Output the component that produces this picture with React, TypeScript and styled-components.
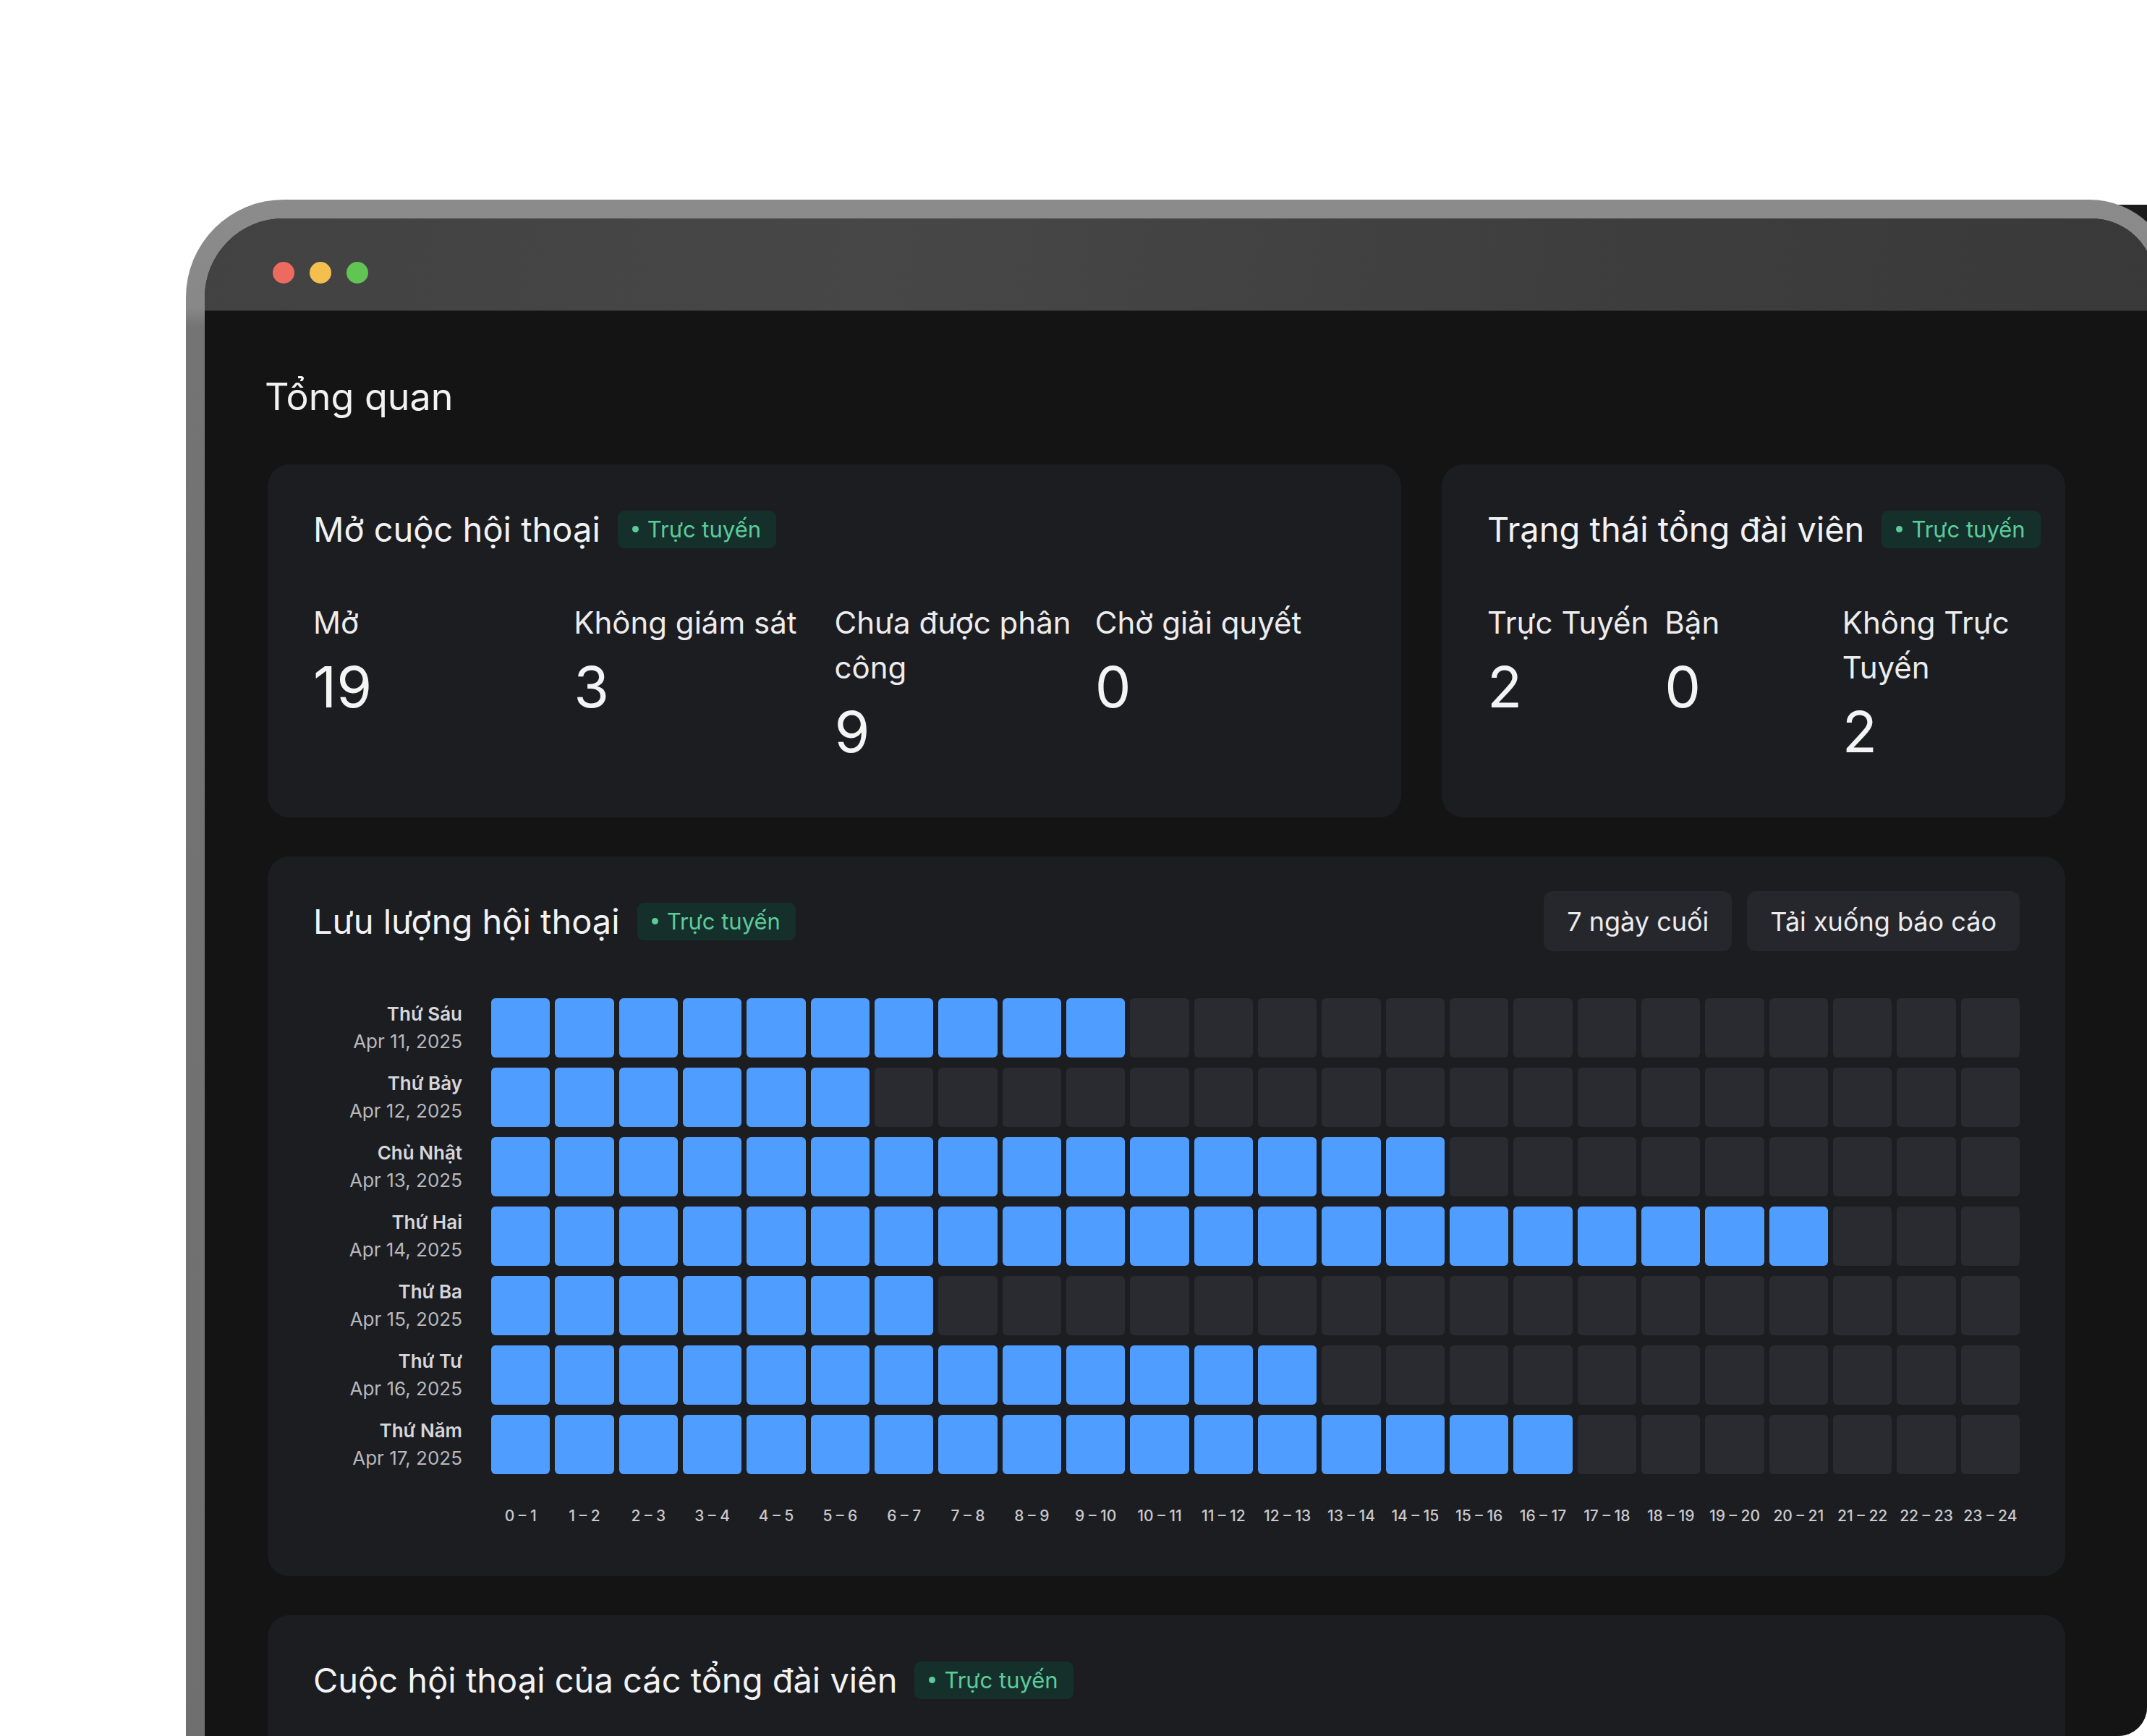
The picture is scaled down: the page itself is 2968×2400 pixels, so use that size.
import React from 'react';
import styled, { createGlobalStyle } from 'styled-components';

const GlobalStyle = createGlobalStyle`
  html, body {
    margin: 0;
    padding: 0;
    background: #ffffff;
    overflow: hidden;
  }
  body {
    font-family: Inter, "Noto Sans", "DejaVu Sans", sans-serif;
    -webkit-font-smoothing: antialiased;
  }
  * {
    box-sizing: border-box;
  }
`;

type Day = { name: string; date: string; filled: number };

const days: Day[] = [
  { name: 'Thứ Sáu', date: 'Apr 11, 2025', filled: 10 },
  { name: 'Thứ Bảy', date: 'Apr 12, 2025', filled: 6 },
  { name: 'Chủ Nhật', date: 'Apr 13, 2025', filled: 15 },
  { name: 'Thứ Hai', date: 'Apr 14, 2025', filled: 21 },
  { name: 'Thứ Ba', date: 'Apr 15, 2025', filled: 7 },
  { name: 'Thứ Tư', date: 'Apr 16, 2025', filled: 13 },
  { name: 'Thứ Năm', date: 'Apr 17, 2025', filled: 17 },
];

const hours = Array.from({ length: 24 }, (_, i) => i);

const openStats = [
  { label: 'Mở', value: 19 },
  { label: 'Không giám sát', value: 3 },
  { label: 'Chưa được phân công', value: 9 },
  { label: 'Chờ giải quyết', value: 0 },
];

const agentStats = [
  { label: 'Trực Tuyến', value: 2 },
  { label: 'Bận', value: 0 },
  { label: 'Không Trực Tuyến', value: 2 },
];

const App: React.FC = () => {
  return (
    <>
      <GlobalStyle />
      <Device>
        <Frame>
          <Screen>
            <TitleBar>
              <Light $color="#ed6a5e" />
              <Light $color="#f5bf4f" />
              <Light $color="#61c554" />
            </TitleBar>
            <Content>
              <PageTitle>Tổng quan</PageTitle>

              <TopGrid>
                <Card>
                  <CardHeader>
                    <CardTitle>Mở cuộc hội thoại</CardTitle>
                    <LiveBadge />
                  </CardHeader>
                  <StatGrid $cols={4}>
                    {openStats.map((s) => (
                      <Stat key={s.label}>
                        <StatLabel>{s.label}</StatLabel>
                        <StatValue>{s.value}</StatValue>
                      </Stat>
                    ))}
                  </StatGrid>
                </Card>

                <Card>
                  <CardHeader>
                    <CardTitle>Trạng thái tổng đài viên</CardTitle>
                    <LiveBadge />
                  </CardHeader>
                  <StatGrid $cols={3}>
                    {agentStats.map((s) => (
                      <Stat key={s.label}>
                        <StatLabel>{s.label}</StatLabel>
                        <StatValue>{s.value}</StatValue>
                      </Stat>
                    ))}
                  </StatGrid>
                </Card>
              </TopGrid>

              <Card $bottom={71}>
                <CardHeader>
                  <CardTitle>Lưu lượng hội thoại</CardTitle>
                  <LiveBadge />
                  <Actions>
                    <ActionButton>7 ngày cuối</ActionButton>
                    <ActionButton>Tải xuống báo cáo</ActionButton>
                  </Actions>
                </CardHeader>

                <Heatmap>
                  {days.map((d) => (
                    <HeatRow key={d.date}>
                      <DayLabel>
                        <DayName>{d.name}</DayName>
                        <DayDate>{d.date}</DayDate>
                      </DayLabel>
                      <Cells>
                        {hours.map((h) => (
                          <Cell key={h} $on={h < d.filled} />
                        ))}
                      </Cells>
                    </HeatRow>
                  ))}
                  <AxisRow>
                    <span />
                    <Cells>
                      {hours.map((h) => (
                        <AxisLabel key={h}>{`${h} – ${h + 1}`}</AxisLabel>
                      ))}
                    </Cells>
                  </AxisRow>
                </Heatmap>
              </Card>

              <Card $minHeight={500}>
                <CardHeader>
                  <CardTitle>Cuộc hội thoại của các tổng đài viên</CardTitle>
                  <LiveBadge />
                </CardHeader>
              </Card>
            </Content>
          </Screen>
        </Frame>
      </Device>
    </>
  );
};

const LiveBadge = () => (
  <Badge>
    <Dot />
    Trực tuyến
  </Badge>
);

const Device = styled.div`
  margin: 276px 0 0 257px;
  width: 2711px;
  height: 2124px;
  overflow: hidden;
  border-bottom-right-radius: 40px;
  background:
    linear-gradient(#ffffff 0 7px, transparent 7px),
    linear-gradient(90deg, transparent 2600px, #1b1b1b 2600px);
`;

const Frame = styled.div`
  width: 2750px;
  height: 100%;
  padding: 26px 0 0 26px;
  border-radius: 135px 119px 0 0;
  background: linear-gradient(
    180deg,
    #8b8b8b 0,
    #888888 150px,
    #747474 175px,
    #6f6f6f 100%
  );
`;

const Screen = styled.div`
  width: 2696px;
  height: 100%;
  border-radius: 109px 88px 0 0;
  background: #141414;
  overflow: hidden;
  display: flex;
  flex-direction: column;
`;

const TitleBar = styled.div`
  height: 128px;
  flex-shrink: 0;
  display: flex;
  align-items: center;
  gap: 21px;
  padding: 22px 0 0 94px;
  background: linear-gradient(100deg, #424242 0%, #474747 35%, #3e3e3e 70%, #393939 100%);
  border-bottom: 1px solid #2b2b2b;
`;

const Light = styled.span<{ $color: string }>`
  width: 30px;
  height: 30px;
  border-radius: 50%;
  background: ${(p) => p.$color};
`;

const Content = styled.div`
  padding: 89px 124px 0 87px;
  display: flex;
  flex-direction: column;
  gap: 54px;
`;

const PageTitle = styled.h1`
  margin: 0 0 9px -4px;
  font-size: 52px;
  line-height: 60px;
  font-weight: 400;
  color: #f2f2f3;
`;

const TopGrid = styled.div`
  display: grid;
  grid-template-columns: 1567px minmax(0, 1fr);
  gap: 56px;
`;

const Card = styled.section<{ $bottom?: number; $minHeight?: number }>`
  min-width: 0;
  background: #1c1d21;
  border-radius: 30px;
  padding: 48px 63px ${(p) => p.$bottom ?? 72}px;
  min-height: ${(p) => (p.$minHeight ? `${p.$minHeight}px` : 'auto')};
  display: flex;
  flex-direction: column;
`;

const CardHeader = styled.div`
  display: flex;
  align-items: center;
  min-height: 83px;
  gap: 24px;
`;

const CardTitle = styled.h2`
  margin: 0;
  font-size: 47px;
  line-height: 56px;
  font-weight: 400;
  color: #f2f2f3;
  white-space: nowrap;
`;

const Badge = styled.span`
  display: inline-flex;
  align-items: center;
  flex-shrink: 0;
  gap: 12px;
  height: 52px;
  padding: 0 21px 0 20px;
  border-radius: 9px;
  background: #15302a;
  color: #5ccb9c;
  font-size: 31px;
  font-weight: 400;
  white-space: nowrap;
`;

const Dot = styled.span`
  width: 9px;
  height: 9px;
  border-radius: 50%;
  background: #5ccb9c;
`;

const Actions = styled.div`
  margin-left: auto;
  display: flex;
  gap: 21px;
`;

const ActionButton = styled.button`
  height: 83px;
  padding: 0 32px;
  border: none;
  border-radius: 13px;
  background: #26272c;
  color: #ececee;
  font-family: inherit;
  font-size: 36px;
  font-weight: 400;
  cursor: pointer;
`;

const StatGrid = styled.div<{ $cols: number }>`
  margin-top: 57px;
  display: grid;
  grid-template-columns: repeat(${(p) => p.$cols}, minmax(0, 1fr));
`;

const Stat = styled.div`
  display: flex;
  flex-direction: column;
  padding-right: 10px;
`;

const StatLabel = styled.div`
  font-size: 42px;
  line-height: 62px;
  color: #ececee;
`;

const StatValue = styled.div`
  margin-top: 10px;
  font-size: 79px;
  line-height: 94px;
  font-weight: 400;
  color: #f4f4f5;
`;

const Heatmap = styled.div`
  margin-top: 65px;
  display: flex;
  flex-direction: column;
  gap: 14px;
`;

const HeatRow = styled.div`
  display: grid;
  grid-template-columns: 206px 1fr;
  column-gap: 40px;
  align-items: center;
`;

const DayLabel = styled.div`
  display: flex;
  flex-direction: column;
  align-items: flex-end;
  font-size: 26px;
  line-height: 38px;
  white-space: nowrap;
`;

const DayName = styled.span`
  font-weight: 600;
  color: #d6d6da;
`;

const DayDate = styled.span`
  font-weight: 400;
  color: #b8b8bd;
`;

const Cells = styled.div`
  display: grid;
  grid-template-columns: repeat(24, minmax(0, 1fr));
  column-gap: 7px;
`;

const Cell = styled.div<{ $on: boolean }>`
  height: 82px;
  border-radius: 6px;
  background: ${(p) => (p.$on ? '#4f9dff' : '#2a2b30')};
`;

const AxisRow = styled(HeatRow)`
  margin-top: 31px;
`;

const AxisLabel = styled.span`
  text-align: center;
  font-size: 21px;
  line-height: 25px;
  font-weight: 500;
  color: #c9c9ce;
  white-space: nowrap;
`;

export default App;
